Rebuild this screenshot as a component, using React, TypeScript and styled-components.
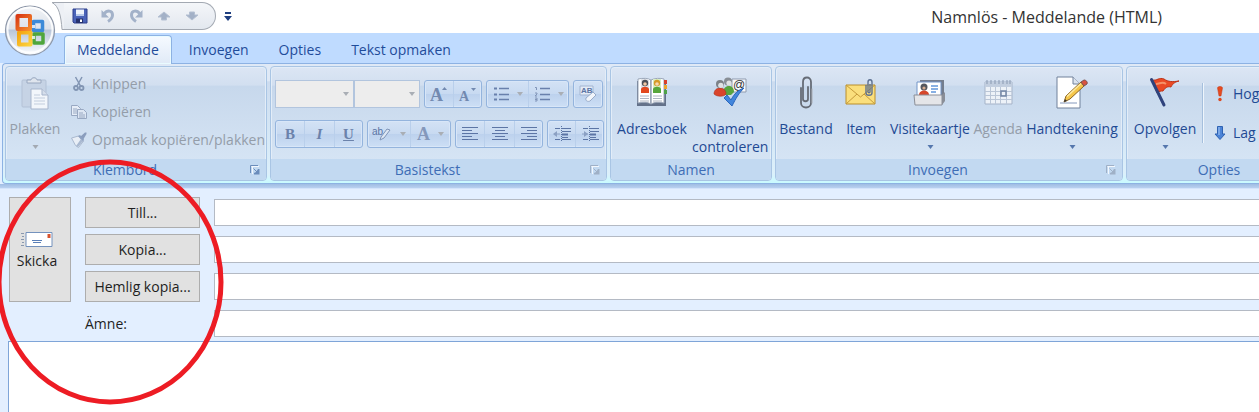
import React from "react";
import styled, { createGlobalStyle } from "styled-components";

const GlobalStyle = createGlobalStyle`
  * { box-sizing: border-box; }
  body {
    margin: 0;
    background: #fff;
    font-family: "Open Sans", "Noto Sans", sans-serif;
    font-size: 14px;
    line-height: 18px;
    color: #1e1e1e;
  }
  button, input, select, textarea { font: inherit; color: inherit; }
`;

const Page = styled.div`
  position: relative;
  min-height: 100vh;
  display: flex;
  flex-direction: column;
  overflow: hidden;
  background: #e3efff;
`;

/* Title bar */
const TitleBar = styled.header`
  height: 33px;
  padding: 2px 97px 0 52px;
  display: flex;
  align-items: flex-start;
  background: #fff;
`;
const Tail = styled.svg`
  display: block;
  flex: none;
`;
const QuickAccess = styled.div`
  height: 28px;
  width: 152px;
  display: flex;
  align-items: center;
  gap: 4px;
  padding-left: 4px;
  border: 1px solid #a3a9b2;
  border-left: 0;
  border-radius: 0 14px 14px 0;
  background: linear-gradient(#f4f6f9, #e3e8ef);
`;
const QuickButton = styled.button`
  width: 24px;
  height: 28px;
  padding: 0;
  border: 0;
  background: none;
  display: grid;
  place-items: center;
`;
const Title = styled.h1`
  margin: 0 0 0 auto;
  padding-top: 4px;
  font-size: 16px;
  line-height: 22px;
  font-weight: 400;
  color: #333;
`;
const Orb = styled.button`
  position: absolute;
  left: 4px;
  top: 4px;
  width: 52px;
  height: 52px;
  padding: 0;
  border: 0;
  background: none;
`;

/* Tabs */
const Tabs = styled.nav`
  height: 30px;
  padding: 2px 0 0 64px;
  display: flex;
  gap: 4px;
  background: #bfdbff;
`;
const Tab = styled.button<{ $active?: boolean }>`
  position: relative;
  height: ${(p) => (p.$active ? 29 : 28)}px;
  padding: 0 12px;
  border: 1px solid ${(p) => (p.$active ? "#8db2e3" : "transparent")};
  border-bottom: 0;
  border-radius: 4px 4px 0 0;
  background: ${(p) => (p.$active ? "linear-gradient(#f6faff, #e0eaf7)" : "none")};
  box-shadow: ${(p) => (p.$active ? "inset 0 0 0 1px #e9fbff" : "none")};
  color: #1f4c9a;
`;

/* Ribbon */
const Ribbon = styled.section`
  height: 121px;
  margin-left: 2px;
  padding: 2px 0 2px 2px;
  display: flex;
  gap: 3px;
  overflow: hidden;
  border: 1px solid #8db2e3;
  border-right: 0;
  border-radius: 4px 0 0 4px;
  background: linear-gradient(#dfe9f6 0 14%, #cddcef 15%, #dcf0fb 92%, #c9fbff);
`;
const RibbonEdge = styled.div`
  height: 5px;
  background: linear-gradient(#9fbde3, #b9d1f0);
  border-bottom: 1px solid #d3e4fb;
`;
const Group = styled.section<{ $width: number }>`
  flex: 0 0 ${(p) => p.$width}px;
  display: flex;
  flex-direction: column;
  border: 1px solid #a9c5e4;
  border-radius: 4px;
  overflow: hidden;
  box-shadow: inset 0 0 0 1px #e3edf8;
  background: linear-gradient(#dce6f4, #d2dff0 16%, #c7d8ec 17%, #d9e7f6);
`;
const GroupBody = styled.div`
  flex: 1;
  display: flex;
  padding: 0 1px;
`;
const GroupFooter = styled.footer`
  height: 21px;
  display: flex;
  align-items: center;
  padding: 0 4px;
  background: #c2d9f1;
  color: #3e6db5;
`;
const GroupName = styled.h2<{ $inset: boolean }>`
  flex: 1;
  margin: 0;
  padding-right: ${(p) => (p.$inset ? 8 : 0)}px;
  font-size: 14px;
  font-weight: 400;
  text-align: center;
`;
const Launcher = styled.button`
  width: 14px;
  height: 14px;
  padding: 0;
  border: 0;
  background: none;
  display: grid;
  place-items: center;
`;
const BigButton = styled.button<{ $width: number }>`
  flex: 0 0 ${(p) => p.$width}px;
  display: flex;
  flex-direction: column;
  align-items: center;
  padding: 9px 0 0;
  border: 0;
  background: none;
  color: #1f4a94;
  white-space: nowrap;
  &:disabled { color: #949da9; }
  > svg:first-child { margin-bottom: 10px; flex: none; }
`;
const Caption = styled.span`
  display: flex;
  justify-content: center;
  text-align: center;
`;
const Caret = styled.svg`
  display: block;
  margin-top: 7px;
`;
const SmallList = styled.div<{ $rowHeight: number; $top: number }>`
  display: grid;
  grid-auto-rows: ${(p) => p.$rowHeight}px;
  align-content: start;
  padding: ${(p) => p.$top}px 0 0 8px;
`;
const SmallButton = styled.button`
  display: flex;
  align-items: center;
  gap: 5px;
  padding: 0;
  border: 0;
  background: none;
  color: #1f4a94;
  white-space: nowrap;
  &:disabled { color: #949da9; }
`;
const Divider = styled.div`
  width: 2px;
  height: 60px;
  margin-top: 16px;
  background: linear-gradient(90deg, #a5bfdd 50%, #eef5fc 50%);
`;

/* Text formatting */
const FormatRows = styled.div`
  display: grid;
  grid-auto-rows: 28px;
  row-gap: 12px;
  align-content: start;
  padding: 13px 0 0 3px;
`;
const FormatRow = styled.div`
  display: flex;
  gap: 4px;
`;
const Combos = styled.div`
  display: flex;
`;
const ComboWrap = styled.label<{ $width: number }>`
  position: relative;
  width: ${(p) => p.$width}px;
  svg { position: absolute; right: 5px; top: 12px; }
`;
const Combo = styled.select`
  appearance: none;
  width: 100%;
  height: 28px;
  border: 1px solid #b2c5de;
  border-radius: 0;
  background: #ededed;
  opacity: 1;
`;
const Cluster = styled.div`
  display: flex;
  border: 1px solid #94b4dd;
  border-radius: 3px;
  background: linear-gradient(#d3e2f5, #c8daf1 48%, #bcd1ed 50%, #cddff5);
  box-shadow: inset 0 0 0 1px #d8e6f8;
`;
const Tool = styled.button<{ $width: number }>`
  width: ${(p) => p.$width}px;
  padding: 0;
  border: 0;
  background: none;
  display: flex;
  align-items: center;
  justify-content: center;
  gap: 8px;
  & + & { border-left: 1px solid #b9cfeb; }
`;
const Letter = styled.span<{ $kind: "bold" | "italic" | "underline" | "plain" }>`
  font-family: "Liberation Serif", serif;
  font-size: ${(p) => (p.$kind === "plain" ? 18 : 15)}px;
  color: ${(p) => (p.$kind === "plain" ? "#8498bb" : "#6b82ab")};
  font-weight: 700;
  font-style: ${(p) => (p.$kind === "italic" ? "italic" : "normal")};
  text-decoration: ${(p) => (p.$kind === "underline" ? "underline" : "none")};
`;

/* Message header */
const Form = styled.form`
  display: grid;
  grid-template-columns: 62px 115px 1fr;
  grid-template-rows: repeat(4, 31px);
  gap: 6px 14px;
  align-items: center;
  padding: 8px 0 2px 9px;
`;
const PushButton = styled.button`
  height: 31px;
  padding: 0;
  border: 1px solid #adadad;
  background: #e1e1e1;
`;
const SendButton = styled(PushButton)`
  grid-row: 1 / span 3;
  height: auto;
  align-self: stretch;
  display: flex;
  flex-direction: column;
  align-items: center;
  justify-content: center;
  gap: 4px;
  padding: 2px 6px 0 0;
`;
const FieldLabel = styled.label`
  grid-column: 2;
`;
const Field = styled.input`
  grid-column: 3;
  width: 100%;
  height: 27px;
  border: 1px solid #b4bac4;
  border-right: 0;
  background: #fff;
  padding: 0 6px;
`;
const Message = styled.textarea`
  flex: 1;
  min-height: 71px;
  margin-left: 8px;
  border: solid #7fa5d8;
  border-width: 1px 0 0 1px;
  background: #fff;
  resize: none;
  outline: none;
`;
const Highlight = styled.svg`
  position: absolute;
  left: 0;
  top: 157px;
  pointer-events: none;
`;

const Arrow = ({ color = "#5577ad" }: { color?: string }) => (
  <Caret width="7" height="4" viewBox="0 0 7 4"><path d="M0.500 0h6L3.500 4z" fill={color} /></Caret>
);
const InlineArrow = ({ color = "#a9aeb5" }: { color?: string }) => (
  <svg width="6" height="4" viewBox="0 0 6 4"><path d="M0 0h6L3 4z" fill={color} /></svg>
);
const Corner = ({ muted }: { muted?: boolean }) => (
  <svg width="10" height="10" viewBox="0 0 10 10" fill="none" stroke={muted ? "#9fb0c6" : "#6a8cbb"}>
    <path d="M0.500 8V0.500H8" />
    <path d="M2.500 1.500V9M1.500 1.500H9" stroke="#f2f7fd" />
    <path d="M3.500 3.500l4 4" />
    <path d="M9.500 4v5.500H4V8l2-1 2-3z" fill={muted ? "#9fb0c6" : "#6a8cbb"} stroke="none" />
  </svg>
);

const OfficeLogo = () => (
  <svg width="52" height="52" viewBox="0 0 52 52">
    <defs>
      <linearGradient id="orb" x1="0" y1="0" x2="0" y2="1">
        <stop offset="0" stopColor="#f2f4f7" />
        <stop offset=".46" stopColor="#dde2ea" />
        <stop offset=".5" stopColor="#b9c6da" />
        <stop offset="1" stopColor="#fbfdff" />
      </linearGradient>
      <linearGradient id="red" x1="0" y1="0" x2="1" y2="1">
        <stop offset="0" stopColor="#d93a14" /><stop offset="1" stopColor="#f58a2c" />
      </linearGradient>
      <linearGradient id="gold" x1="0" y1="0" x2="1" y2="1">
        <stop offset="0" stopColor="#f5a511" /><stop offset="1" stopColor="#fbd23e" />
      </linearGradient>
    </defs>
    <circle cx="26" cy="26.500" r="24.500" fill="url(#orb)" stroke="#8d97a8" strokeWidth="1.200" />
    <circle cx="26" cy="26" r="22.500" fill="none" stroke="#fff" strokeWidth="2" opacity=".85" />
    <g fill="none" strokeLinejoin="round">
      <rect x="29.500" y="17.500" width="9" height="9" stroke="#3c8ad8" strokeWidth="3.500" />
      <rect x="30" y="30" width="9" height="9" stroke="#4fa63c" strokeWidth="3.500" />
      <rect x="15" y="28.500" width="11.500" height="12" stroke="url(#gold)" strokeWidth="4" />
      <rect x="13.500" y="12" width="12.500" height="13" stroke="url(#red)" strokeWidth="4" />
    </g>
    <path d="M28 21h3v3h-3zM28 32h3v3h-3z" fill="#f8fbff" opacity=".8" />
  </svg>
);

const SaveIcon = () => (
  <svg width="16" height="16" viewBox="0 0 16 16">
    <path d="M1 1h14v14H2l-1-1z" fill="#4a63b8" stroke="#2d3f8c" />
    <path d="M4 1.500h8V8H4z" fill="#eef3fb" /><path d="M4 6h8v2H4z" fill="#b9caeb" />
    <path d="M4 10.500h7V15H4z" fill="#25316d" /><path d="M8 11.500h2V14H8z" fill="#fff" />
  </svg>
);
const UndoIcon = ({ flip }: { flip?: boolean }) => (
  <svg width="16" height="16" viewBox="0 0 16 16" fill="none">
    <g transform={flip ? "matrix(-1 0 0 1 16 0)" : undefined}>
      <path d="M4 6c3-4 8.500-4 8.500 1 0 3-2 5-4.500 6.500" stroke="#a3b2c9" strokeWidth="3" />
      <path d="M1.500 2v7.500H9z" fill="#a3b2c9" />
    </g>
  </svg>
);
const MoveIcon = ({ down }: { down?: boolean }) => (
  <svg width="14" height="10" viewBox="0 0 14 10">
    <path d={down ? "M7 9L1 4h3.500V1h5v3H13z" : "M7 1l6 5H9.500v3h-5V6H1z"} fill="#a3b1c7" stroke="#b4c0d2" />
  </svg>
);
const PasteIcon = () => (
  <svg width="34" height="34" viewBox="0 0 34 34">
    <rect x="4" y="4" width="24" height="27" rx="1" fill="#c6d3e5" stroke="#b3c1d6" />
    <path d="M9 7V4h4c0-3 6-3 6 0h4v3z" fill="#dfe5ee" stroke="#98a7bf" />
    <path d="M13 13h11l6 6v14H13z" fill="#f2f6fb" stroke="#a7b5cc" />
    <path d="M24 13v6h6" fill="#d5deeb" stroke="#a7b5cc" />
    <path d="M16 19h6M16 22h11M16 25h11M16 28h11" stroke="#c2cddd" />
  </svg>
);
const CutIcon = () => (
  <svg width="16" height="16" viewBox="0 0 16 16" fill="none" stroke="#8295b3">
    <path d="M4.500 1l5 9M11 1L6 10" strokeWidth="1.500" />
    <circle cx="5" cy="12" r="2" strokeWidth="1.800" /><circle cx="10.500" cy="12" r="2" strokeWidth="1.800" />
  </svg>
);
const CopyIcon = () => (
  <svg width="16" height="16" viewBox="0 0 16 16" stroke="#98a8c2">
    <path d="M.5 1.500h6l3 3v7h-9z" fill="#e6edf7" /><path d="M2 5h4M2 7h4M2 9h4" />
    <path d="M6.500 5.500h6l3 3v6h-9z" fill="#dde6f3" /><path d="M8 9h4M8 11h6M8 13h6" />
  </svg>
);
const BrushIcon = () => (
  <svg width="16" height="16" viewBox="0 0 16 16">
    <path d="M0.500 6l7-2 5 5-5 6.500-3-2z" fill="#e8eef6" stroke="#a9b8ce" />
    <path d="M7 4l2-1 4 4-1 3z" fill="#8ea2c1" /><path d="M9.500 4.500L14 .5h1.500V2L12.500 7z" fill="#8a9dbd" />
    <path d="M7 15l5-6-2-2-5 7z" fill="#a9b9d1" />
  </svg>
);
const ListIcon = ({ numbered }: { numbered?: boolean }) => (
  <svg width="16" height="16" viewBox="0 0 16 16" fill="none" stroke="#6980ac">
    {numbered
      ? <path d="M1 1.500h1.500V4M1 7h2v1l-2 2h2M1 12h2v3H1M1 13.500h2" stroke="#8195b8" />
      : <path d="M1 2.500h3M1 8.500h3M1 13.500h3" strokeWidth="2" />}
    <path d="M6 2.500h10M6 8.500h10M6 13.500h10" strokeWidth="1.300" />
  </svg>
);
const AlignIcon = ({ kind }: { kind: "left" | "center" | "right" }) => {
  const start = (w: number) => (kind === "left" ? 0 : kind === "right" ? 16 - w : (16 - w) / 2);
  return (
    <svg width="16" height="14" viewBox="0 0 16 14" stroke="#5c75a5">
      {[16, 10, 16, 10, 16].map((w, i) => (
        <path key={i} d={`M${start(w)} ${i * 3 + 0.5}h${w}`} />
      ))}
    </svg>
  );
};
const IndentIcon = ({ more }: { more?: boolean }) => (
  <svg width="18" height="16" viewBox="0 0 18 16" stroke="#5c75a5">
    <path d="M2 2.500h5M2 13.500h5M9 2.500h9M9 5.500h9M9 11.500h6M9 13.500h9" />
    <path d="M9 8.500h6" strokeWidth="2" /><path d="M8.500 0v16" strokeDasharray="1 1" />
    <path d={more ? "M7 8L3 5v6z" : "M0 8l4-3v6z"} fill="#8ba0c3" stroke="none" />
    <path d="M1 8h6" stroke="#8ba0c3" />
  </svg>
);
const HighlightIcon = () => (
  <svg width="20" height="18" viewBox="0 0 20 18">
    <text x="0" y="10" fontFamily="Liberation Sans, sans-serif" fontSize="10" fill="#5b74a3">ab</text>
    <path d="M9 12l6-8 3 1-6 8-4 2z" fill="#dce6f3" stroke="#7f94b8" />
  </svg>
);
const ClearIcon = () => (
  <svg width="20" height="20" viewBox="0 0 20 20">
    <path d="M2 2h13v9H2z" fill="#e3ebf6" stroke="#a2b4d1" />
    <text x="3" y="9" fontFamily="Liberation Sans, sans-serif" fontSize="8" fontWeight="700" fill="#5b74a3">AB</text>
    <path d="M8 14l7-6 3 3-6 6c-2 1-5 0-4-3z" fill="#f1f5fb" stroke="#98abc9" />
  </svg>
);
const SizeLetter = ({ down }: { down?: boolean }) => (
  <svg width="20" height="24" viewBox="0 0 20 24">
    <text x="1" y="19" fontFamily="Liberation Serif, serif" fontSize={down ? 14 : 18} fontWeight="700" fill="#7289b0">A</text>
    <path d={down ? "M13 6h5l-2.500 3z" : "M13 8h5l-2.500-3z"} fill="#7289b0" />
  </svg>
);

const AddressBookIcon = () => (
  <svg width="34" height="34" viewBox="0 0 34 34">
    <path d="M2 5h29v25H2z" fill="#64728a" />
    <path d="M3 3c5-1 10-1 13 1v24c-3-2-8-2-13-1zM16 4c4-2 9-2 13-1v24c-5-1-10-1-13 1z" fill="#fff" stroke="#9aa6b8" />
    <path d="M29 4h3v4h-3z" fill="#d8402b" /><path d="M29 9h3v4h-3z" fill="#efa62c" /><path d="M29 14h3v4h-3z" fill="#4fa347" />
    <rect x="6" y="3" width="8" height="14" fill="#dfe3e9" /><rect x="18" y="3" width="8" height="14" fill="#d7edc3" />
    <circle cx="10" cy="7" r="3.200" fill="#4b4f57" /><path d="M6 17v-4c1-3 7-3 8 0v4z" fill="#e2481f" />
    <circle cx="22" cy="7" r="3.200" fill="#d79a28" /><path d="M18 17v-4c1-3 7-3 8 0v4z" fill="#57a63c" />
    <circle cx="10" cy="8" r="1.800" fill="#f2c9a4" /><circle cx="22" cy="8" r="1.800" fill="#f6d8b2" />
    <path d="M5 20h9M5 22.500h9M5 25h9M18 20h9M18 22.500h9M18 25h9" stroke="#aeb6c3" />
    <path d="M15.500 4v24" stroke="#9ba6b7" />
  </svg>
);
const CheckNamesIcon = () => (
  <svg width="34" height="34" viewBox="0 0 34 34">
    <path d="M19 3h14v13H19z" fill="#f8f9fb" stroke="#8f9baf" />
    <text x="20" y="13" fontFamily="Liberation Sans, sans-serif" fontSize="12" fill="#333">@</text>
    <path d="M10 17c0-9 11-9 11-1l-3 3h-6z" fill="#58a43e" />
    <circle cx="15" cy="5.500" r="4" fill="#888e95" /><circle cx="16" cy="7" r="2.600" fill="#dfe2e4" />
    <path d="M1 18c0-8 12-8 12 0-2 3-9 3-12 0z" fill="#d9442b" stroke="#a9331f" strokeWidth=".6" />
    <circle cx="7" cy="8" r="4" fill="#7c8187" /><circle cx="7.800" cy="9.300" r="2.600" fill="#dfe2e4" />
    <path d="M11 22l3-3 4 5C21 18 25 14 31 12c-5 5-8 10-12 18z" fill="#4286dc" stroke="#2b67bc" />
  </svg>
);
const ClipIcon = () => (
  <svg width="34" height="34" viewBox="0 0 34 34" fill="none" strokeLinecap="round">
    <path d="M12 12v15c0 6 10 6 10 0V6c0-6-8-6-8 0v17c0 3 5 3 5 0V11" stroke="#666c76" strokeWidth="1.800" />
    <path d="M23 13v14" stroke="#a9aeb6" />
  </svg>
);
const ItemIcon = () => (
  <svg width="34" height="34" viewBox="0 0 34 34">
    <path d="M2 9h29v19H2z" fill="#fbdf7c" stroke="#b98e2d" />
    <path d="M2 28l11-10M31 28L20 18M2 9l14.500 12L31 9" fill="none" stroke="#c69b3b" />
    <path d="M22 9v8c0 3 6 3 6 0V6c0-3-4-3-4 0v10c0 1 2 1 2 0V8" fill="none" stroke="#5d7192" strokeWidth="1.400" />
  </svg>
);
const CardIcon = () => (
  <svg width="34" height="34" viewBox="0 0 34 34">
    <path d="M7 4h24v20l-3 4V8H7z" fill="#747d8d" />
    <path d="M4 6h24v17H4z" fill="#fff" stroke="#7295c8" />
    <circle cx="11" cy="11" r="3.500" fill="#55585e" /><circle cx="11" cy="12" r="1.600" fill="#d8ad90" /><path d="M6 19c0-6 10-6 10 0z" fill="#d6462a" />
    <path d="M18 10h7M18 13h7M18 16h5" stroke="#6296da" strokeWidth="1.400" />
    <path d="M1 19h28v10H2z" fill="#e4e5e8" stroke="#8b8f98" /><path d="M29 19l3-3v9l-3 4z" fill="#8a8e97" />
  </svg>
);
const CalendarIcon = () => (
  <svg width="34" height="34" viewBox="0 0 34 34" fill="none">
    <path d="M4 6h27v22H4z" fill="#edf2f8" stroke="#a5b3c8" /><path d="M4 6h27v5H4z" fill="#c2cedf" />
    <path d="M4 15.500h27M4 19.500h27M4 23.500h27M9.500 11v17M14.500 11v17M19.500 11v17M25.500 11v17" stroke="#bac6d7" />
    <path d="M6 4v4M10 4v4M14 4v4M18 4v4M22 4v4M26 4v4M29 4v4" stroke="#8999b1" />
    <path d="M20 15h5v5h-5z" stroke="#7386a5" strokeWidth="1.500" />
  </svg>
);
const SignatureIcon = () => (
  <svg width="34" height="34" viewBox="0 0 34 34">
    <path d="M2 1h16l7 7v24H2z" fill="#fff" stroke="#71819b" /><path d="M18 1v7h7" fill="#dce4ef" stroke="#71819b" />
    <path d="M5 27h17" stroke="#8498bc" />
    <path d="M9 26l2-6L26 6l3 4-14 13z" fill="#f5c64b" stroke="#8a6421" />
    <path d="M12 20.500l14-13" stroke="#fdeaa2" strokeWidth="1.500" />
    <path d="M26 6l3-2c2 0 4 2 3 4l-3 2z" fill="#d8533f" stroke="#7d5451" /><path d="M9 26l1-3 2 2z" fill="#333" />
  </svg>
);
const FlagIcon = () => (
  <svg width="34" height="34" viewBox="0 0 34 34">
    <path d="M4 4c5 1 7-3 12-1 4 3 9 3 15 2-5 1-7 4-8 6-4-1-6 1-8 4-2 0-4 0-6 2z" fill="#ea4a25" stroke="#bd3216" />
    <path d="M8 8c4 0 6-3 10 0" stroke="#f69168" strokeWidth="2" fill="none" />
    <path d="M3.500 3.500L16 29" stroke="#2f437c" strokeWidth="3" strokeLinecap="round" />
  </svg>
);
const HighIcon = () => (
  <svg width="16" height="16" viewBox="0 0 16 16">
    <path d="M5.500 2c0-2 5-2 5 0L9 10H7z" fill="#e54b20" stroke="#c4391a" strokeWidth=".5" /><circle cx="8" cy="13.500" r="1.700" fill="#dd4a22" />
  </svg>
);
const LowIcon = () => (
  <svg width="16" height="16" viewBox="0 0 16 16">
    <path d="M5.500 1.500h5V9H13l-5 5.500L3 9h2.500z" fill="#4b84d8" stroke="#2e62b2" /><path d="M7 2v8" stroke="#a9c9f4" />
  </svg>
);
const EnvelopeIcon = () => (
  <svg width="32" height="16" viewBox="0 0 32 16">
    <path d="M5 .5h26v14H5z" fill="#fff" stroke="#7492bd" /><path d="M26.500 2h3v4h-3z" fill="#d8532d" />
    <path d="M11 8.500h10M12 10.500h8" stroke="#5a7fb8" /><path d="M0 1.500h3M1 4.500h2M0 7.500h3M1 10.500h2M0 13.500h3" stroke="#8a98ae" />
  </svg>
);

interface GroupProps {
  name: string;
  width: number;
  launcher?: "on" | "off";
  children: React.ReactNode;
}
const RibbonGroup = ({ name, width, launcher, children }: GroupProps) => (
  <Group $width={width}>
    <GroupBody>{children}</GroupBody>
    <GroupFooter>
      <GroupName $inset={Boolean(launcher)}>{name}</GroupName>
      {launcher && (
        <Launcher aria-label={name}><Corner muted={launcher === "off"} /></Launcher>
      )}
    </GroupFooter>
  </Group>
);

export default function App() {
  return (
    <Page>
      <GlobalStyle />
      <TitleBar>
        <Tail width="12" height="28" viewBox="0 0 12 28">
          <path d="M0 .5C7 4 9 14 10 27.500h2V.5z" fill="#edf0f5" />
          <path d="M12 .5H0C7 4 9 14 10 27.500h2" fill="none" stroke="#a3a9b2" />
        </Tail>
        <QuickAccess>
          <QuickButton aria-label="Opslaan"><SaveIcon /></QuickButton>
          <QuickButton aria-label="Ongedaan maken"><UndoIcon /></QuickButton>
          <QuickButton aria-label="Opnieuw"><UndoIcon flip /></QuickButton>
          <QuickButton aria-label="Vorige"><MoveIcon /></QuickButton>
          <QuickButton aria-label="Volgende"><MoveIcon down /></QuickButton>
        </QuickAccess>
        <QuickButton aria-label="Werkbalk aanpassen">
          <svg width="8" height="9" viewBox="0 0 8 9"><path d="M1 0h6v2H1zM0 4h8L4 9z" fill="#1f3f80" /></svg>
        </QuickButton>
        <Title>Namnlös - Meddelande (HTML)</Title>
      </TitleBar>
      <Tabs>
        <Tab $active>Meddelande</Tab>
        <Tab>Invoegen</Tab>
        <Tab>Opties</Tab>
        <Tab>Tekst opmaken</Tab>
      </Tabs>
      <Orb aria-label="Office"><OfficeLogo /></Orb>

      <Ribbon>
        <RibbonGroup name="Klembord" width={262} launcher="on">
          <BigButton $width={56} disabled>
            <PasteIcon />
            <Caption>Plakken</Caption>
            <Arrow color="#a3a9b2" />
          </BigButton>
          <SmallList $rowHeight={28} $top={3}>
            <SmallButton disabled><CutIcon />Knippen</SmallButton>
            <SmallButton disabled><CopyIcon />Kopiëren</SmallButton>
            <SmallButton disabled><BrushIcon />Opmaak kopiëren/plakken</SmallButton>
          </SmallList>
        </RibbonGroup>

        <RibbonGroup name="Basistekst" width={337} launcher="off">
          <FormatRows>
            <FormatRow>
              <Combos>
                <ComboWrap $width={79}><Combo disabled aria-label="Lettertype" /><InlineArrow /></ComboWrap>
                <ComboWrap $width={66}><Combo disabled aria-label="Tekengrootte" /><InlineArrow /></ComboWrap>
              </Combos>
              <Cluster>
                <Tool $width={28} aria-label="Groter"><SizeLetter /></Tool>
                <Tool $width={28} aria-label="Kleiner"><SizeLetter down /></Tool>
              </Cluster>
              <Cluster>
                <Tool $width={41} aria-label="Opsomming"><ListIcon /><InlineArrow /></Tool>
                <Tool $width={40} aria-label="Nummering"><ListIcon numbered /><InlineArrow /></Tool>
              </Cluster>
              <Cluster>
                <Tool $width={28} aria-label="Opmaak wissen"><ClearIcon /></Tool>
              </Cluster>
            </FormatRow>
            <FormatRow>
              <Cluster>
                <Tool $width={28}><Letter $kind="bold">B</Letter></Tool>
                <Tool $width={30}><Letter $kind="italic">I</Letter></Tool>
                <Tool $width={28}><Letter $kind="underline">U</Letter></Tool>
              </Cluster>
              <Cluster>
                <Tool $width={42} aria-label="Markeren"><HighlightIcon /><InlineArrow /></Tool>
                <Tool $width={40} aria-label="Tekstkleur"><Letter $kind="plain">A</Letter><InlineArrow /></Tool>
              </Cluster>
              <Cluster>
                <Tool $width={28} aria-label="Links"><AlignIcon kind="left" /></Tool>
                <Tool $width={30} aria-label="Midden"><AlignIcon kind="center" /></Tool>
                <Tool $width={28} aria-label="Rechts"><AlignIcon kind="right" /></Tool>
              </Cluster>
              <Cluster>
                <Tool $width={27} aria-label="Minder inspringen"><IndentIcon /></Tool>
                <Tool $width={28} aria-label="Meer inspringen"><IndentIcon more /></Tool>
              </Cluster>
            </FormatRow>
          </FormatRows>
        </RibbonGroup>

        <RibbonGroup name="Namen" width={162}>
          <BigButton $width={80}><AddressBookIcon /><Caption>Adresboek</Caption></BigButton>
          <BigButton $width={74}><CheckNamesIcon /><Caption>Namen<br />controleren</Caption></BigButton>
        </RibbonGroup>

        <RibbonGroup name="Invoegen" width={348} launcher="off">
          <BigButton $width={58}><ClipIcon /><Caption>Bestand</Caption></BigButton>
          <BigButton $width={52}><ItemIcon /><Caption>Item</Caption></BigButton>
          <BigButton $width={86}><CardIcon /><Caption>Visitekaartje</Caption><Arrow /></BigButton>
          <BigButton $width={50} disabled><CalendarIcon /><Caption>Agenda</Caption></BigButton>
          <BigButton $width={98}><SignatureIcon /><Caption>Handtekening</Caption><Arrow /></BigButton>
        </RibbonGroup>

        <RibbonGroup name="Opties" width={186}>
          <BigButton $width={74}><FlagIcon /><Caption>Opvolgen</Caption><Arrow /></BigButton>
          <Divider />
          <SmallList $rowHeight={39} $top={7}>
            <SmallButton><HighIcon />Hog</SmallButton>
            <SmallButton><LowIcon />Lag</SmallButton>
          </SmallList>
        </RibbonGroup>
      </Ribbon>
      <RibbonEdge />

      <Form>
        <SendButton type="button"><EnvelopeIcon />Skicka</SendButton>
        <PushButton type="button">Till...</PushButton>
        <Field aria-label="Till" />
        <PushButton type="button">Kopia...</PushButton>
        <Field aria-label="Kopia" />
        <PushButton type="button">Hemlig kopia...</PushButton>
        <Field aria-label="Hemlig kopia" />
        <FieldLabel htmlFor="subject">Ämne:</FieldLabel>
        <Field id="subject" />
      </Form>
      <Message aria-label="Meddelande" />

      <Highlight width="226" height="250" viewBox="0 0 226 250">
        <ellipse cx="110" cy="125" rx="111" ry="120" fill="none" stroke="#ed1c24" strokeWidth="5" />
      </Highlight>
    </Page>
  );
}
